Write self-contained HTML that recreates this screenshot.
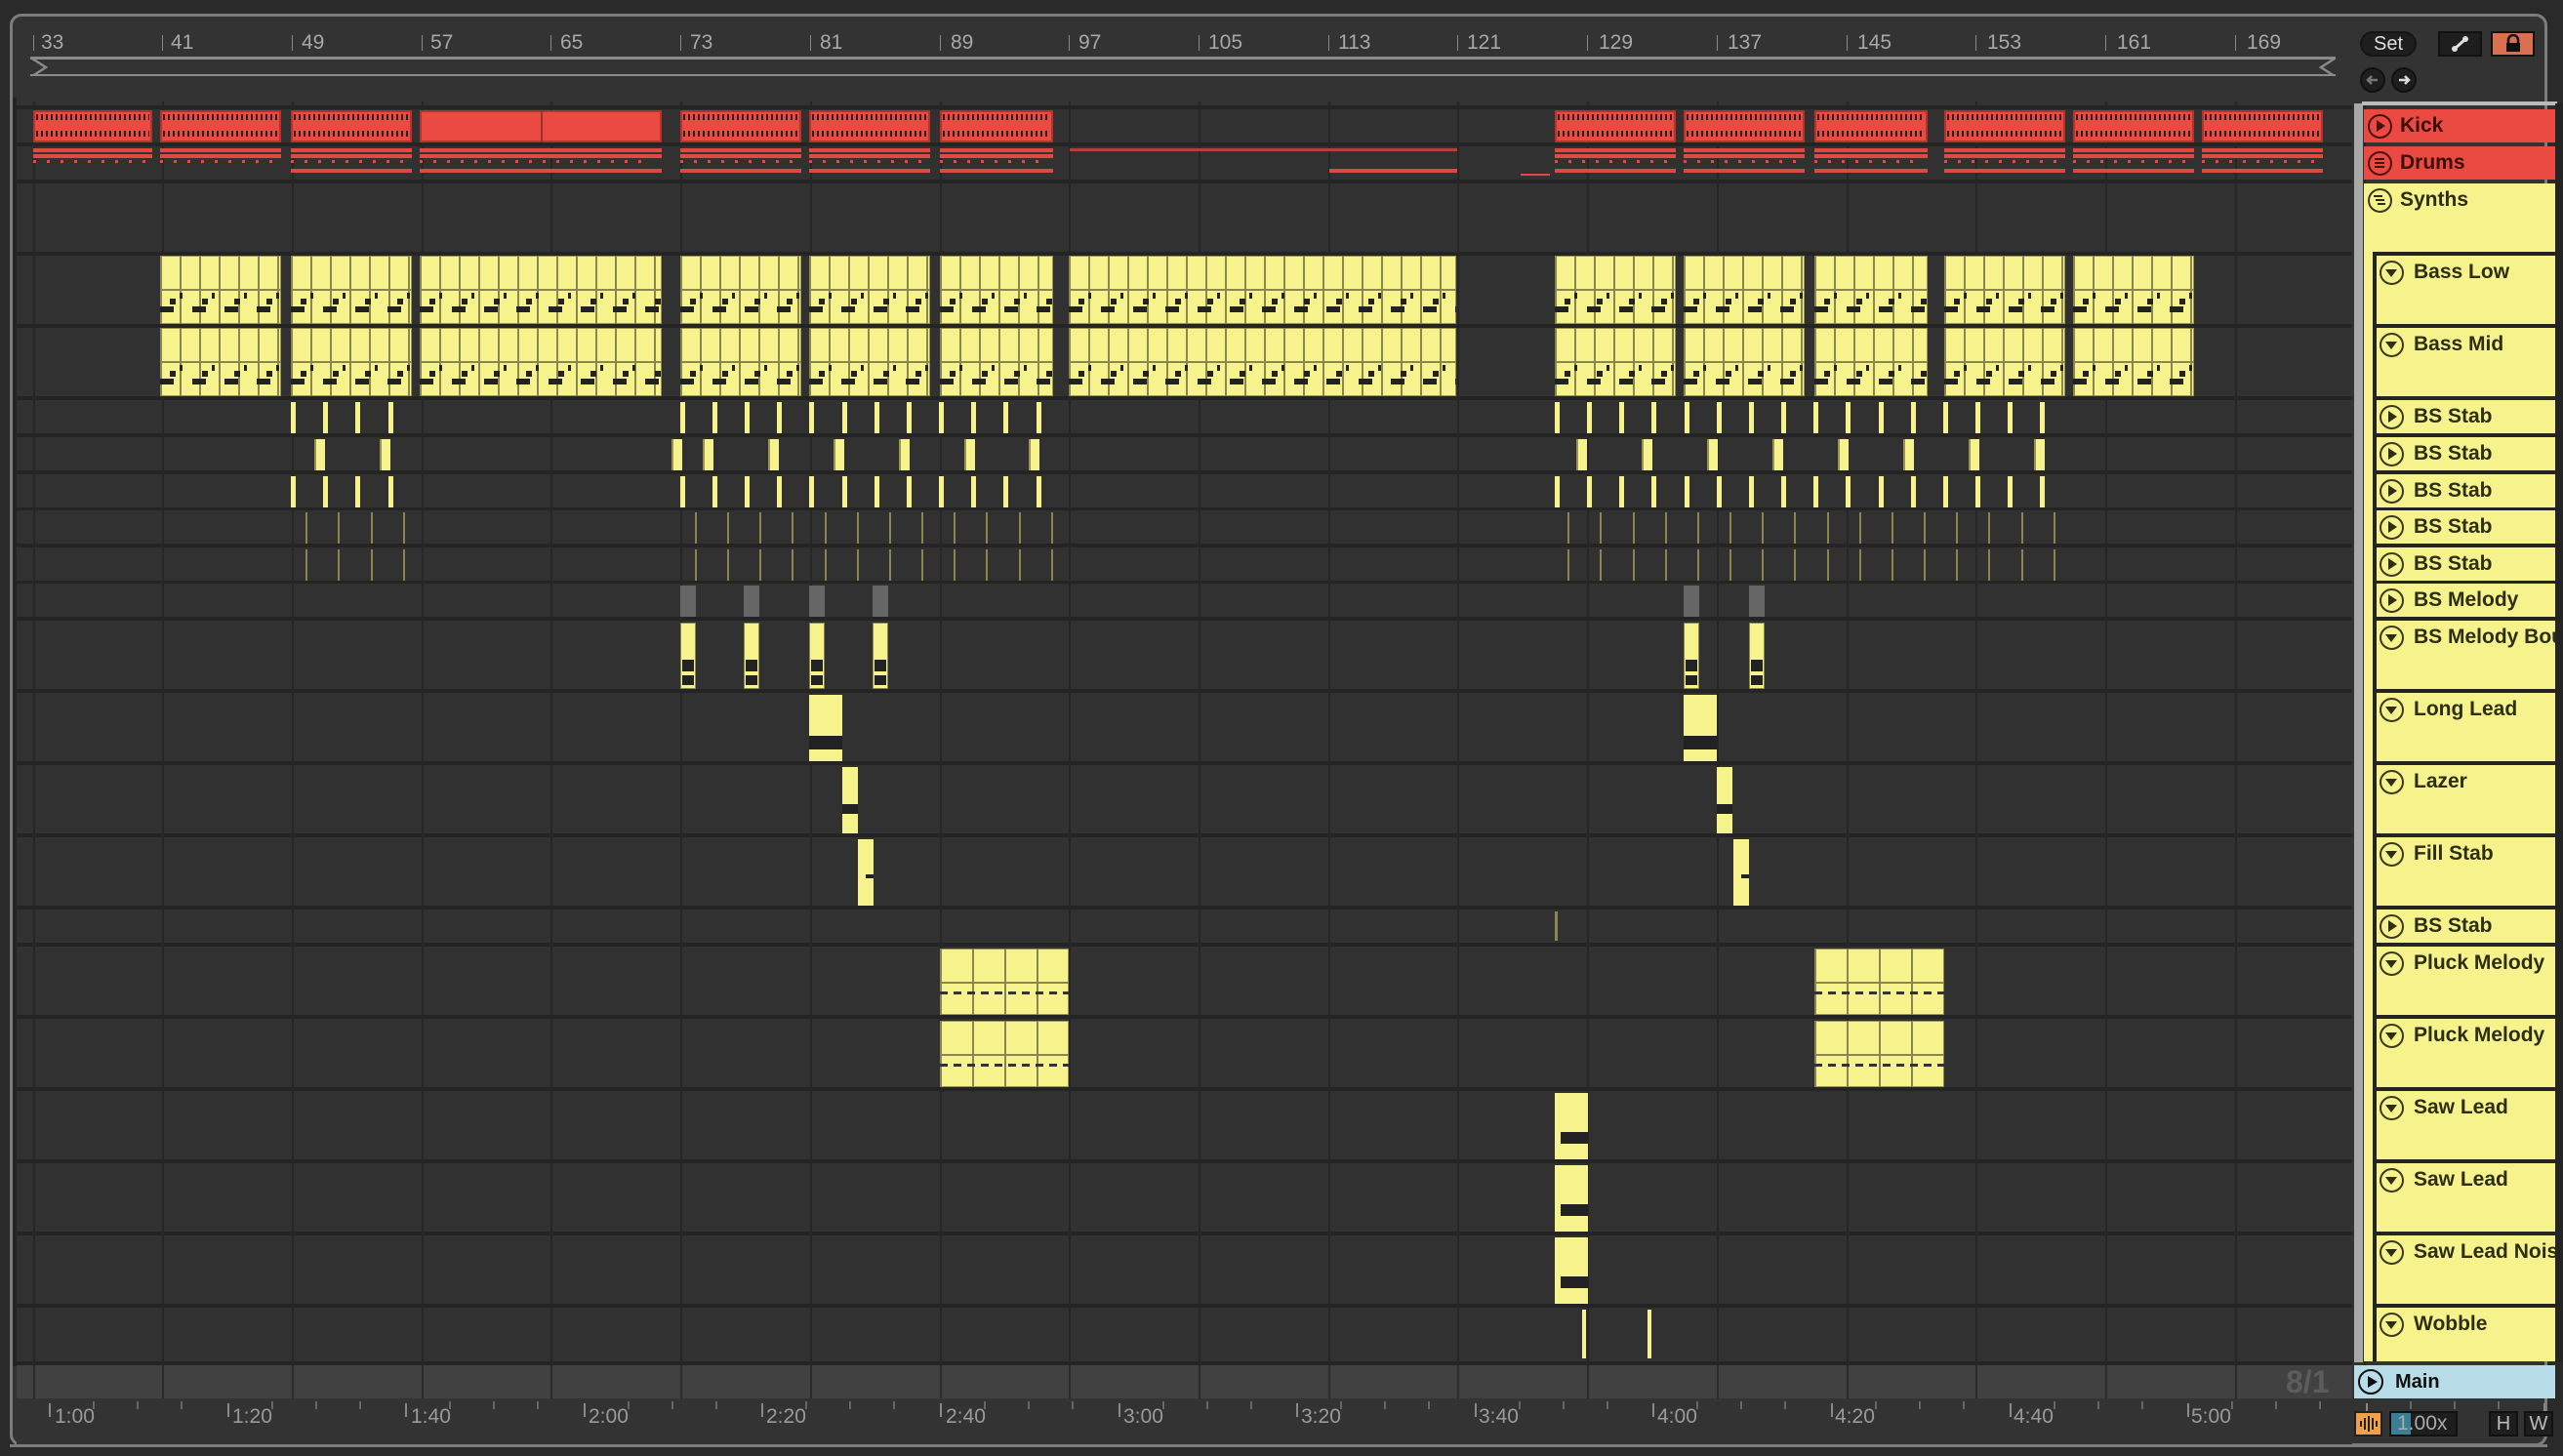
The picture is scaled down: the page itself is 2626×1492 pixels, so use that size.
<!DOCTYPE html>
<html><head><meta charset="utf-8">
<style>
*{margin:0;padding:0;box-sizing:border-box}
body{width:2626px;height:1492px;background:#2a2a2a;position:relative;overflow:hidden;font-family:"Liberation Sans",sans-serif}
.a{position:absolute}
#frame{left:10px;top:14px;width:2600px;height:1468px;border:3px solid #7c7c7c;border-radius:12px;background:#333}
.lbl{position:absolute;height:34px;font-weight:bold;font-size:21px;color:#2e2e14;line-height:34px;padding-left:37px;white-space:nowrap;overflow:hidden}
.n{left:2431px;width:187px;background:#f6f28c;border-left:4px solid #242424;padding-left:38px}
.ic{position:absolute;left:4px;top:5px;width:25px;height:25px;border:2.5px solid #3a3a20;border-radius:50%}
.n .ic{left:3px}
.ic svg{position:absolute;left:0;top:0}
.num{position:absolute;top:32px;font-size:21px;color:#a8a8a8}
.tm{position:absolute;top:1440px;font-size:21px;color:#9a9a9a}
</style></head><body>
<svg width="0" height="0" style="position:absolute"><defs>
<symbol id="pl" viewBox="0 0 20 20"><path d="M7 4 L16 10 L7 16Z" fill="#2e2e14"/></symbol>
<symbol id="dn" viewBox="0 0 20 20"><path d="M4 7 L16 7 L10 15Z" fill="#2e2e14"/></symbol>
<symbol id="ls" viewBox="0 0 20 20"><path d="M5 6h10M5 10h10M5 14h10" stroke="#4a120e" stroke-width="2"/></symbol>
<symbol id="ls2" viewBox="0 0 20 20"><path d="M4 6h9M6 10h9M8 14h8" stroke="#2e2e14" stroke-width="2"/></symbol>
</defs></svg>
<div id="frame" class="a"></div>
<div class="a" style="left:13px;top:100px;width:2397px;height:1300px;background:#242424"></div>
<div class="a" style="left:31px;top:58px;width:2362px;height:21px;border:3px solid #8a8a8a;border-left:none;border-right:none"></div>
<svg class="a" style="left:31px;top:58px" width="20" height="22"><path d="M2 2 L16 11 L2 20" fill="none" stroke="#8a8a8a" stroke-width="2.5"/></svg>
<svg class="a" style="left:2374px;top:58px" width="20" height="22"><path d="M18 2 L4 11 L18 20" fill="none" stroke="#8a8a8a" stroke-width="2.5"/></svg>
<div id="arr" class="a" style="left:0;top:0"></div>
<!-- right panel -->
<div class="a" style="left:2412px;top:106px;width:9px;height:1290px;background:#a8a8a8"></div>
<div class="a" style="left:2418px;top:32px;width:58px;height:26px;border-radius:13px;background:#1e1e1e;border:2px solid #151515;color:#ddd;font-size:20px;text-align:center;line-height:22px">Set</div>
<div class="a" style="left:2498px;top:32px;width:45px;height:26px;background:#1e1e1e;border:2px solid #111"></div>
<svg class="a" style="left:2510px;top:35px" width="22" height="20"><path d="M5 15 L16 5" stroke="#ddd" stroke-width="3"/><circle cx="5" cy="15" r="3" fill="#ddd"/><circle cx="16" cy="5" r="3" fill="#ddd"/></svg>
<div class="a" style="left:2552px;top:32px;width:45px;height:26px;background:#d9704f;border:2px solid #111"></div>
<svg class="a" style="left:2566px;top:35px" width="18" height="20"><path d="M4 9 V6 A5 5 0 0 1 14 6 V9" fill="none" stroke="#111" stroke-width="2.5"/><rect x="2" y="9" width="14" height="9" fill="#111"/></svg>
<div class="a" style="left:2418px;top:69px;width:26px;height:26px;border-radius:50%;background:#1e1e1e;border:2px solid #111"></div>
<svg class="a" style="left:2422px;top:73px" width="18" height="18"><path d="M14 9H4M8 5L4 9L8 13" fill="none" stroke="#777" stroke-width="2.5"/></svg>
<div class="a" style="left:2450px;top:69px;width:26px;height:26px;border-radius:50%;background:#1e1e1e;border:2px solid #111"></div>
<svg class="a" style="left:2454px;top:73px" width="18" height="18"><path d="M4 9H14M10 5L14 9L10 13" fill="none" stroke="#ddd" stroke-width="2.5"/></svg>
<div class="a" style="left:2420px;top:104px;width:200px;height:4px;background:#bbb"></div>
<div class="a" style="left:2342px;top:1398px;font-size:32px;font-weight:bold;color:#5c5c5c">8/1</div>
<div class="a" style="left:2412px;top:1399px;width:206px;height:34px;background:#b9dde8"></div>
<div class="a" style="left:2416px;top:1403px;width:26px;height:26px;border:2.5px solid #111;border-radius:50%"></div>
<svg class="a" style="left:2425px;top:1409px" width="12" height="14"><path d="M1 1 L11 7 L1 13Z" fill="#111"/></svg>
<div class="a" style="left:2454px;top:1399px;font-size:20px;font-weight:bold;line-height:34px;color:#111">Main</div>
<div class="a" style="left:2412px;top:1446px;width:29px;height:26px;background:#f0a04b;border:2px solid #222"></div>
<svg class="a" style="left:2417px;top:1450px" width="20" height="18"><path d="M2 6v6M6 3v12M10 1v16M14 3v12M18 6v6" stroke="#222" stroke-width="2"/></svg>
<div class="a" style="left:2448px;top:1446px;width:70px;height:26px;background:#1e1e1e;border:2px solid #111;color:#aaa;font-size:21px;line-height:22px;padding-left:6px"><span style="position:absolute;left:0;top:0;width:20px;height:22px;background:#3a7f95"></span><span style="position:relative">1.00x</span></div>
<div class="a" style="left:2550px;top:1446px;width:30px;height:26px;background:#1e1e1e;border:2px solid #111;color:#bbb;font-size:20px;text-align:center;line-height:22px">H</div>
<div class="a" style="left:2586px;top:1446px;width:30px;height:26px;background:#1e1e1e;border:2px solid #111;color:#bbb;font-size:20px;text-align:center;line-height:22px">W</div>
<div class="a" style="left:10px;top:1480px;width:2600px;height:3px;background:#7c7c7c"></div>

<div class="num" style="left:42px">33</div><div class="num" style="left:175px">41</div><div class="num" style="left:309px">49</div><div class="num" style="left:441px">57</div><div class="num" style="left:574px">65</div><div class="num" style="left:707px">73</div><div class="num" style="left:840px">81</div><div class="num" style="left:974px">89</div><div class="num" style="left:1105px">97</div><div class="num" style="left:1238px">105</div><div class="num" style="left:1371px">113</div><div class="num" style="left:1503px">121</div><div class="num" style="left:1638px">129</div><div class="num" style="left:1770px">137</div><div class="num" style="left:1903px">145</div><div class="num" style="left:2036px">153</div><div class="num" style="left:2169px">161</div><div class="num" style="left:2302px">169</div>

<div class="tm" style="left:56px">1:00</div><div class="tm" style="left:238px">1:20</div><div class="tm" style="left:421px">1:40</div><div class="tm" style="left:603px">2:00</div><div class="tm" style="left:785px">2:20</div><div class="tm" style="left:969px">2:40</div><div class="tm" style="left:1151px">3:00</div><div class="tm" style="left:1333px">3:20</div><div class="tm" style="left:1515px">3:40</div><div class="tm" style="left:1698px">4:00</div><div class="tm" style="left:1880px">4:20</div><div class="tm" style="left:2063px">4:40</div><div class="tm" style="left:2245px">5:00</div>

<div class="lbl" style="left:2422px;top:112px;width:196px;background:#ea4a42;color:#3a0e0a"><span class="ic" style="border-color:#4a120e"><svg width="20" height="20"><path d="M7 4 L16 10 L7 16Z" fill="#4a120e"/></svg></span>Kick</div>
<div class="lbl" style="left:2422px;top:150px;width:196px;background:#ea4a42;color:#3a0e0a"><span class="ic" style="border-color:#4a120e"><svg width="20" height="20"><use href="#ls"/></svg></span>Drums</div>
<div class="lbl" style="left:2422px;top:188px;width:196px;height:1207px;background:#f6f28c"><span class="ic"><svg width="20" height="20"><use href="#ls2"/></svg></span>Synths</div>
<div class="a" style="left:2431px;top:258px;width:187px;height:1137px;background:#242424"></div>
<div class="lbl n" style="top:262px;height:70px"><span class="ic"><svg width="20" height="20"><use href="#dn"/></svg></span>Bass Low</div>
<div class="lbl n" style="top:336px;height:70px"><span class="ic"><svg width="20" height="20"><use href="#dn"/></svg></span>Bass Mid</div>
<div class="lbl n" style="top:410px"><span class="ic"><svg width="20" height="20"><use href="#pl"/></svg></span>BS Stab</div>
<div class="lbl n" style="top:448px"><span class="ic"><svg width="20" height="20"><use href="#pl"/></svg></span>BS Stab</div>
<div class="lbl n" style="top:486px"><span class="ic"><svg width="20" height="20"><use href="#pl"/></svg></span>BS Stab</div>
<div class="lbl n" style="top:523px"><span class="ic"><svg width="20" height="20"><use href="#pl"/></svg></span>BS Stab</div>
<div class="lbl n" style="top:561px"><span class="ic"><svg width="20" height="20"><use href="#pl"/></svg></span>BS Stab</div>
<div class="lbl n" style="top:598px"><span class="ic"><svg width="20" height="20"><use href="#pl"/></svg></span>BS Melody</div>
<div class="lbl n" style="top:636px;height:70px"><span class="ic"><svg width="20" height="20"><use href="#dn"/></svg></span>BS Melody Bou</div>
<div class="lbl n" style="top:710px;height:70px"><span class="ic"><svg width="20" height="20"><use href="#dn"/></svg></span>Long Lead</div>
<div class="lbl n" style="top:784px;height:70px"><span class="ic"><svg width="20" height="20"><use href="#dn"/></svg></span>Lazer</div>
<div class="lbl n" style="top:858px;height:70px"><span class="ic"><svg width="20" height="20"><use href="#dn"/></svg></span>Fill Stab</div>
<div class="lbl n" style="top:932px"><span class="ic"><svg width="20" height="20"><use href="#pl"/></svg></span>BS Stab</div>
<div class="lbl n" style="top:970px;height:70px"><span class="ic"><svg width="20" height="20"><use href="#dn"/></svg></span>Pluck Melody</div>
<div class="lbl n" style="top:1044px;height:70px"><span class="ic"><svg width="20" height="20"><use href="#dn"/></svg></span>Pluck Melody</div>
<div class="lbl n" style="top:1118px;height:70px"><span class="ic"><svg width="20" height="20"><use href="#dn"/></svg></span>Saw Lead</div>
<div class="lbl n" style="top:1192px;height:70px"><span class="ic"><svg width="20" height="20"><use href="#dn"/></svg></span>Saw Lead</div>
<div class="lbl n" style="top:1266px;height:70px"><span class="ic"><svg width="20" height="20"><use href="#dn"/></svg></span>Saw Lead Nois</div>
<div class="lbl n" style="top:1340px;height:55px"><span class="ic"><svg width="20" height="20"><use href="#dn"/></svg></span>Wobble</div>
<div class="a" style="left:2618px;top:106px;width:8px;height:1290px;background:#242424"></div>

<script>
var A=document.getElementById('arr'),S=1.675,h='';
function r(x,y,w,hh,c,ex){h+='<div class="a" style="left:'+x+'px;top:'+y+'px;width:'+w+'px;height:'+hh+'px;background:'+c+';'+(ex||'')+'"></div>';}
var rows=[[112,34],[150,34],[188,70],[262,70],[336,70],[410,34],[448,34],[486,34],[523,34],[561,34],[598,34],[636,70],[710,70],[784,70],[858,70],[932,34],[970,70],[1044,70],[1118,70],[1192,70],[1266,70],[1340,55]];
r(17,78,2393,30,'#333');
rows.forEach(function(q){r(17,q[0],2393,q[1],'#313131');});
r(17,1399,2393,34,'#414141');
r(17,1433,2393,47,'#333');
function bx(b){return Math.round(33.5+(b-33)*16.59);}
for(var b=33;b<=177;b+=8){var x=bx(b);r(x,104,2,1295,'#262626');r(x,1399,2,34,'#2c2c2c');r(x,36,1,16,'#888');}
for(var t=0;t<=14;t++){var x=Math.round(50+t*182.6);r(x,1438,2,14,'#888');for(var k=1;k<4;k++)r(x+k*45,1436,2,8,'#666');}
var segs=[[20,93],[98,172],[178,252],[257,405],[416,490],[495,569],[575,644],[951,1025],[1030,1104],[1110,1179],[1189,1263],[1268,1342],[1347,1421]];
segs.forEach(function(s,i){var x=s[0]*S,w=(s[1]-s[0])*S;r(x,113,w,33,'#ea4a42','border:2px solid #b8322c');
 if(i!=3){r(x+3,117,w-6,6,'repeating-linear-gradient(90deg,#222 0 2px,transparent 2px 5px)');r(x+3,134,w-6,6,'repeating-linear-gradient(90deg,#222 0 2px,transparent 2px 5px)');}
 else r(x+w/2,113,2,33,'#a0302a');
 r(x,152,w,10,'#e04a42');r(x,156,w,2,'#333');r(x,164,w*0.95,3,'repeating-linear-gradient(90deg,#e04a42 0 3px,transparent 3px 14px)');if(i>1)r(x,173,w,4,'#d84a42');});
r(1096,152,397,3,'#b84038');r(1362,173,131,4,'#d84a42');r(1558,178,30,2,'#d84a42');
var ys=[[98,172],[178,252],[257,405],[416,490],[495,569],[575,644],[654,891],[951,1025],[1030,1104],[1110,1179],[1189,1263],[1268,1342]];
[262,336].forEach(function(y){ys.forEach(function(s){var x=s[0]*S,w=(s[1]-s[0])*S;
 r(x,y,w,70,'#f6f28c','border:1px solid #9a9650');
 r(x,y,w,70,'repeating-linear-gradient(90deg,#8a8650 0 2px,transparent 2px 20px)');
 r(x,y+34,w,2,'#8a8650');
 r(x,y+52,w,6,'repeating-linear-gradient(90deg,#222 0 14px,transparent 14px 33px)');
 r(x+10,y+44,w-10,6,'repeating-linear-gradient(90deg,#222 0 6px,transparent 6px 33px)');
 r(x+20,y+38,w-20,6,'repeating-linear-gradient(90deg,#222 0 3px,transparent 3px 33px)');});});
function ticks(y,hh,ranges,step,wd,col){ranges.forEach(function(g){for(var x=g[0];x<=g[1];x+=step){r(x*S,y,wd,hh,col);}});}
var R1=[[178,240],[416,636],[951,1250]];
ticks(412,32,R1,19.8,5,'#f6f28c');ticks(488,32,R1,19.8,5,'#f6f28c');
[192,232,411,430,470,510,550,590,629,964,1004,1044,1084,1124,1164,1204,1244].forEach(function(p){r(p*S,450,11,32,'#f6f28c','border-left:2px solid #999450');});
var R2=[[187,247],[425,643],[959,1257]];
ticks(525,32,R2,19.8,2,'#8a8650');ticks(563,32,R2,19.8,2,'#8a8650');
[416,455,495,534,1030,1070].forEach(function(x){r(x*S,600,16,32,'#666');r(x*S,638,16,68,'#f6f28c','border:1px solid #8a8650');r(x*S+2,676,12,12,'#222');r(x*S+2,692,12,10,'#222');});
[[495,710],[1030,710]].forEach(function(p){r(p[0]*S,p[1]+2,34,68,'#f6f28c');r(p[0]*S,p[1]+44,34,14,'#222');});
[[515,784],[1050,784]].forEach(function(p){r(p[0]*S,p[1]+2,16,68,'#f6f28c');r(p[0]*S,p[1]+40,16,10,'#222');});
[[525,858],[1060,858]].forEach(function(p){r(p[0]*S,p[1]+2,16,68,'#f6f28c');r(p[0]*S+8,p[1]+38,8,4,'#222');});
r(951*S,934,3,30,'#8a8650');
[[575,654],[1110,1189]].forEach(function(s){[970,1044].forEach(function(y){var x=s[0]*S,w=(s[1]-s[0])*S;r(x,y+2,w,68,'#f6f28c','border:1px solid #9a9650');r(x,y+2,w,68,'repeating-linear-gradient(90deg,#8a8650 0 2px,transparent 2px 33px)');r(x,y+36,w,2,'#8a8650');r(x,y+46,w,3,'repeating-linear-gradient(90deg,#333 0 8px,transparent 8px 14px)');});});
[1118,1192,1266].forEach(function(y){r(951*S,y+2,34,68,'#f6f28c');r(951*S+6,y+42,28,12,'#222');});
r(968*S,1342,4,50,'#f6f28c');r(1008*S,1342,4,50,'#f6f28c');
A.innerHTML=h;
</script>
</body></html>
